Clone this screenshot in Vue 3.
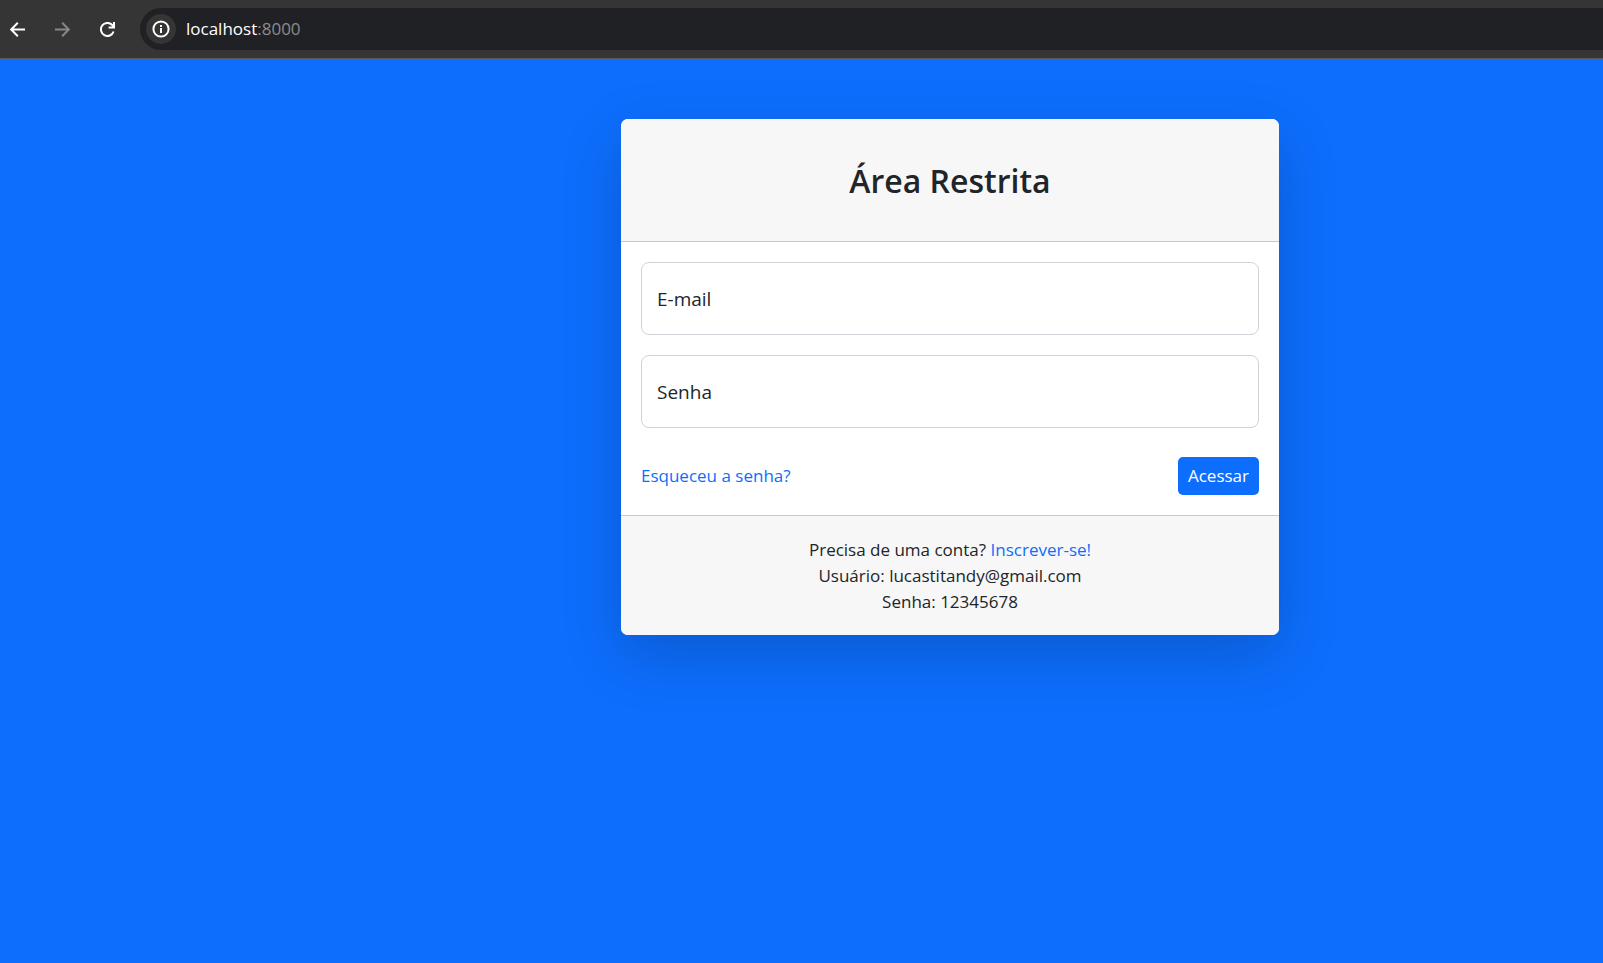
<script setup>
import { ref } from 'vue'

const email = ref('')
const password = ref('')
</script>

<template>
  <div class="page">
    <header class="toolbar">
      <nav class="nav" aria-label="Navegador">
        <button type="button" class="tool" aria-label="Voltar">
          <svg viewBox="0 0 15 15" width="15" height="15"><path d="M15 7.5H1.5M7.8.8 1.2 7.5l6.6 6.7" /></svg>
        </button>
        <button type="button" class="tool dim" aria-label="Avançar">
          <svg viewBox="0 0 15 15" width="15" height="15"><path d="M0 7.5h13.5M7.2.8l6.6 6.7-6.6 6.7" /></svg>
        </button>
        <button type="button" class="tool" aria-label="Recarregar">
          <svg viewBox="0 0 15 15" width="15" height="15"><path d="M13.6 9.5A6.5 6.5 0 1 1 12.2 3L14 5M14 0V5.4H8.6" /></svg>
        </button>
      </nav>
      <div class="address">
        <button type="button" class="info" aria-label="Informações do site">
          <svg viewBox="0 0 18 18" width="18" height="18">
            <circle cx="9" cy="9" r="7.6" />
            <path d="M9 8v5M9 5v2" />
          </svg>
        </button>
        <span class="url">localhost<span class="port">:8000</span></span>
      </div>
    </header>

    <main class="content">
      <section class="card">
        <div class="card-header"><h3>Área Restrita</h3></div>
        <form class="card-body" @submit.prevent>
          <div class="field">
            <input id="email" v-model="email" type="email" />
            <label v-show="!email" for="email">E-mail</label>
          </div>
          <div class="field">
            <input id="password" v-model="password" type="password" />
            <label v-show="!password" for="password">Senha</label>
          </div>
          <div class="actions">
            <a href="#">Esqueceu a senha?</a>
            <button type="submit" class="submit">Acessar</button>
          </div>
        </form>
        <div class="card-footer">
          <div>Precisa de uma conta? <a href="#">Inscrever-se!</a></div>
          <div>Usuário: lucastitandy@gmail.com</div>
          <div>Senha: 12345678</div>
        </div>
      </section>
    </main>
  </div>
</template>

<style>
body {
  margin: 0;
  background: #0d6efd;
}
</style>

<style scoped>
.page {
  display: flex;
  flex-direction: column;
  min-height: 100vh;
  background: #0d6efd;
  color: #212529;
  font-family: "Segoe UI", "Open Sans", "Noto Sans", sans-serif;
  font-size: 17px;
  line-height: 26px;
}
* {
  box-sizing: border-box;
}
button {
  border: 0;
  padding: 0;
  font: inherit;
}
svg {
  display: block;
  fill: none;
  stroke: currentColor;
  stroke-width: 2;
}
a {
  color: #0d6efd;
  text-decoration: none;
}
.toolbar {
  display: flex;
  align-items: center;
  padding: 8px 0;
  background: #353535;
  border-bottom: 1px solid #5a5a5a;
}
.nav {
  display: flex;
  gap: 30px;
  padding: 0 25px 0 10px;
}
.tool {
  display: flex;
  background: transparent;
  color: #fff;
}
.dim {
  color: #868686;
}
.address {
  display: flex;
  flex: 1;
  align-items: center;
  gap: 10px;
  height: 42px;
  padding-left: 6px;
  border-radius: 21px 0 0 21px;
  background: #202124;
}
.info {
  display: grid;
  place-items: center;
  width: 30px;
  height: 30px;
  border-radius: 50%;
  background: #353535;
  color: #fff;
}
.url {
  color: #fff;
}
.port {
  color: #8b8c8e;
}
.content {
  display: grid;
  grid-template-columns: 621fr minmax(320px, 658fr) 324fr;
  padding: 60px 0;
}
.card {
  grid-column: 2;
  overflow: hidden;
  border-radius: 7px;
  background: #fff;
  box-shadow: 0 20px 60px rgba(0, 0, 0, 0.18);
}
.card-header {
  padding: 41px 20px 39px;
  border-bottom: 1px solid #c8c8c8;
  background: #f7f7f7;
  text-align: center;
}
h3 {
  margin: 0;
  font-size: 32px;
  font-weight: 600;
  line-height: 42px;
}
.card-body {
  display: grid;
  gap: 20px;
  padding: 20px;
}
.field {
  display: grid;
  align-items: center;
}
.field > * {
  grid-area: 1 / 1;
}
.field input {
  width: 100%;
  height: 73px;
  padding: 0 16px;
  border: 1px solid #ced4da;
  border-radius: 8px;
  background: #fff;
  color: inherit;
  font: inherit;
}
.field label {
  justify-self: start;
  padding-left: 16px;
  font-size: 19px;
  pointer-events: none;
}
.actions {
  display: flex;
  align-items: center;
  justify-content: space-between;
  padding-top: 9px;
}
.submit {
  padding: 6px 10px;
  border-radius: 5px;
  background: #0d6efd;
  color: #fff;
}
.card-footer {
  padding: 21px 20px 20px;
  border-top: 1px solid #c8c8c8;
  background: #f7f7f7;
  text-align: center;
}
</style>
